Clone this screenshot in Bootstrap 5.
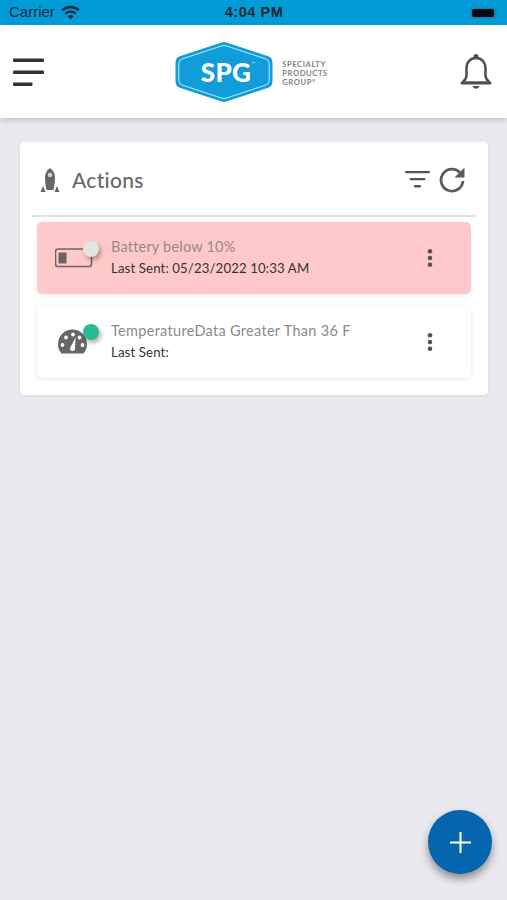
<!DOCTYPE html>
<html lang="en">
<head>
<meta charset="utf-8">
<title>Actions</title>
<link href="https://cdn.jsdelivr.net/npm/bootstrap@5.3.0/dist/css/bootstrap.min.css" rel="stylesheet">
<style>
html,body{height:100%}
body{background:#e9e9ef;font-family:"Lato","Liberation Sans",sans-serif;position:relative;height:900px;overflow:hidden}
.stat-bar{height:25px;background:#019cd8;color:#0f2a38;font-family:"Liberation Sans",sans-serif;font-size:15px;padding:0 8px 0 9px}
.stat-side{width:110px}
.wifi-gap{gap:6px}
.stat-time{font-size:14.5px;letter-spacing:.55px;color:#16272f}
.top-bar{height:93px;background:#fff;box-shadow:0 2px 6px rgba(0,0,0,.18);padding:0 15px 0 13px}
.logo-word{font-family:"Lato",sans-serif;font-size:7.6px;line-height:9px;letter-spacing:.6px;color:#808285;font-weight:700;margin-left:7px;padding-top:4px}
.main-panel{margin:24px 19px 0 20px;height:253px;background:#fff;border-radius:4px;box-shadow:0 1px 3px rgba(0,0,0,.08);padding:0 12px}
.panel-head{height:75px;border-bottom:2px solid #dfe1e4;padding:1px 10px 0 7px;margin-bottom:5px}
.rocket-glyph{margin-top:2px}
.panel-title{font-size:21px;color:#666;font-weight:500;margin-left:11px;letter-spacing:.3px;line-height:1}
.filter-glyph{margin-right:8px}
.act-row{height:72px;margin:0 5px 12px;border-radius:5px;padding:0 38px 0 18px}
.act-alert{background:#ffc9c9;box-shadow:0 2px 4px rgba(0,0,0,.06)}
.act-plain{background:#fff;box-shadow:0 1px 5px rgba(0,0,0,.09)}
.act-icon{position:relative;width:38px;height:40px;margin-right:18px;flex:none}
.dot-status{position:absolute;width:16px;height:16px;border-radius:50%;box-shadow:2px 3px 4px rgba(0,0,0,.3);left:28px}
.dot-grey{background:#e4e4e1;top:3px}
.dot-green{background:#2db792;top:2px}
.act-text{padding-bottom:2px}
.act-name{font-size:14.5px;color:#8a8a8a;line-height:20px;letter-spacing:.3px}
.act-alert .act-name{color:#958a8a;letter-spacing:.2px}
.act-sent{font-size:13.2px;color:#333;line-height:20px;margin-top:1px;letter-spacing:.13px}
.fab-add{position:absolute;left:428px;top:810px;width:64px;height:64px;border-radius:50%;background:#0565ad;border:0;box-shadow:0 5px 9px rgba(0,0,0,.4);padding:0}
.fab-add:hover,.fab-add:active{background:#0565ad}
</style>
</head>
<body>
<div class="stat-bar d-flex align-items-center justify-content-between">
  <div class="stat-side d-flex align-items-center wifi-gap">
    <span>Carrier</span>
    <svg width="19" height="15" viewBox="0 0 19 15"><g fill="none" stroke="#0f2a38" stroke-width="2.400"><path d="M1.200 5.400a12 12 0 0 1 16.600 0"/><path d="M4.300 8.700a7.600 7.600 0 0 1 10.400 0"/></g><path d="M6.600 11.300a4.200 4.200 0 0 1 5.800 0l-2.900 3z" fill="#0f2a38"/></svg>
  </div>
  <div class="stat-time fw-bold">4:04 PM</div>
  <div class="stat-side d-flex justify-content-end">
    <svg width="30" height="14" viewBox="0 0 30 14"><rect x="1" y="1.500" width="26" height="11" rx="3.500" fill="#0a87b8"/><rect x="3" y="3" width="22" height="8" rx="2" fill="#060a0c"/><rect x="27.500" y="5" width="1.500" height="4" rx=".7" fill="#0a87b8"/></svg>
  </div>
</div>
<div class="top-bar d-flex align-items-center justify-content-between">
  <svg width="32" height="32" viewBox="0 0 32 32"><g fill="#333"><rect y="2.500" width="31" height="3.500" rx="1"/><rect y="14.500" width="31" height="3.500" rx="1"/><rect y="26.500" width="19.500" height="3.500" rx="1"/></g></svg>
  <div class="d-flex align-items-center me-1">
    <svg width="102" height="62" viewBox="0 0 102 62"><path d="M48.500 1.500a8 8 0 0 1 5 0l41 13.500a7 7 0 0 1 5 6.500v19a7 7 0 0 1-5 6.500l-41 13.500a8 8 0 0 1-5 0l-41-13.500a7 7 0 0 1-5-6.500v-19a7 7 0 0 1 5-6.500z" fill="#109dda"/><path d="M49 4.800a6 6 0 0 1 4 0l39.500 13a5 5 0 0 1 3.700 4.700v17a5 5 0 0 1-3.700 4.700L53 57.200a6 6 0 0 1-4 0L9.500 44.200a5 5 0 0 1-3.700-4.700v-17a5 5 0 0 1 3.700-4.700z" fill="none" stroke="#c4e8f8" stroke-width="1"/><text x="53" y="40.500" text-anchor="middle" font-family="Lato,sans-serif" font-weight="900" font-size="26" letter-spacing=".4" fill="#fff">SPG</text><text x="79" y="24" font-family="Lato,sans-serif" font-size="4" fill="#fff">™</text></svg>
    <div class="logo-word">SPECIALTY<br>PRODUCTS<br>GROUP°</div>
  </div>
  <svg width="32" height="38" viewBox="0 0 32 38"><path d="M16 5c-6 0-9.500 4.500-9.500 10.500v7c0 3-1.500 4.500-4 7h27c-2.500-2.500-4-4-4-7v-7C25.500 9.500 22 5 16 5z" fill="none" stroke="#505050" stroke-width="2.600" stroke-linejoin="round"/><circle cx="16" cy="3.500" r="2.500" fill="#505050"/><path d="M12.500 33h7c-.5 1.800-2 2.800-3.500 2.800s-3-1-3.500-2.800z" fill="#505050"/><rect x="0.500" y="29" width="31" height="2.600" rx="1.300" fill="#505050"/></svg>
</div>
<div class="main-panel">
  <div class="panel-head d-flex align-items-center">
    <svg class="rocket-glyph" width="22" height="26" viewBox="0 0 22 26"><path d="M11 1c3.500 2.500 5 5.500 5 9.500 0 5-.8 9-1.500 12.500h-7C6.800 20 6 15.500 6 10.500 6 6.500 7.500 3.500 11 1z" fill="#666"/><circle cx="11" cy="8" r="2.300" fill="#fff" opacity=".7"/><path d="M4 19l2.500 6H1.500zM18 19l2.500 6h-5z" fill="#666"/></svg>
    <div class="panel-title flex-grow-1">Actions</div>
    <svg width="26" height="20" viewBox="0 0 26 20" class="filter-glyph"><g fill="#555"><rect x="0" y="2" width="25" height="2.200" rx="1"/><rect x="4.500" y="9" width="16" height="2.200" rx="1"/><rect x="9" y="16" width="7" height="2.400" rx="1"/></g></svg>
    <svg width="27" height="27" viewBox="0 0 27 27"><path d="M21 6.500A11 11 0 1 0 24 15" fill="none" stroke="#5c5c5c" stroke-width="2.800"/><path d="M25.500 1.500v10H15.500z" fill="#5c5c5c"/></svg>
  </div>
  <div class="act-row act-alert d-flex align-items-center">
    <div class="act-icon">
      <svg width="38" height="40" viewBox="0 0 38 40"><rect x="0.500" y="11" width="36" height="17.500" rx="2.500" fill="none" stroke="#6d6363" stroke-width="1.600"/><rect x="3.500" y="14.500" width="8" height="11" fill="#6d6363"/></svg>
      <span class="dot-status dot-grey"></span>
    </div>
    <div class="flex-grow-1 act-text">
      <div class="act-name">Battery below 10%</div>
      <div class="act-sent">Last Sent: 05/23/2022 10:33 AM</div>
    </div>
    <svg width="6" height="20" viewBox="0 0 6 20"><g fill="#555"><circle cx="3" cy="3.300" r="2.300"/><circle cx="3" cy="10" r="2.300"/><circle cx="3" cy="16.700" r="2.300"/></g></svg>
  </div>
  <div class="act-row act-plain d-flex align-items-center">
    <div class="act-icon">
      <svg width="38" height="40" viewBox="0 0 38 40"><path d="M6.500 31.500A14.500 14.500 0 1 1 28.500 31.500z" fill="#666"/><g fill="#fff"><circle cx="7.500" cy="23" r="1.900"/><circle cx="11" cy="15.500" r="1.900"/><circle cx="18" cy="12.500" r="1.900"/><circle cx="24.500" cy="15.500" r="1.900"/><circle cx="27.500" cy="23" r="1.900"/></g><path d="M20.500 15.500l-.5 11.500a2.500 2.500 0 1 1-4.900-1z" fill="#fff"/></svg>
      <span class="dot-status dot-green"></span>
    </div>
    <div class="flex-grow-1 act-text">
      <div class="act-name">TemperatureData Greater Than 36 F</div>
      <div class="act-sent">Last Sent:</div>
    </div>
    <svg width="6" height="20" viewBox="0 0 6 20"><g fill="#555"><circle cx="3" cy="3.300" r="2.300"/><circle cx="3" cy="10" r="2.300"/><circle cx="3" cy="16.700" r="2.300"/></g></svg>
  </div>
</div>
<button class="btn fab-add d-flex align-items-center justify-content-center" type="button" aria-label="Add">
  <svg width="21" height="21" viewBox="0 0 21 21"><path d="M10.500 0v21M0 10.500h21" stroke="#fff" stroke-width="2"/></svg>
</button>
<script src="https://cdn.jsdelivr.net/npm/bootstrap@5.3.0/dist/js/bootstrap.bundle.min.js"></script>
</body>
</html>
